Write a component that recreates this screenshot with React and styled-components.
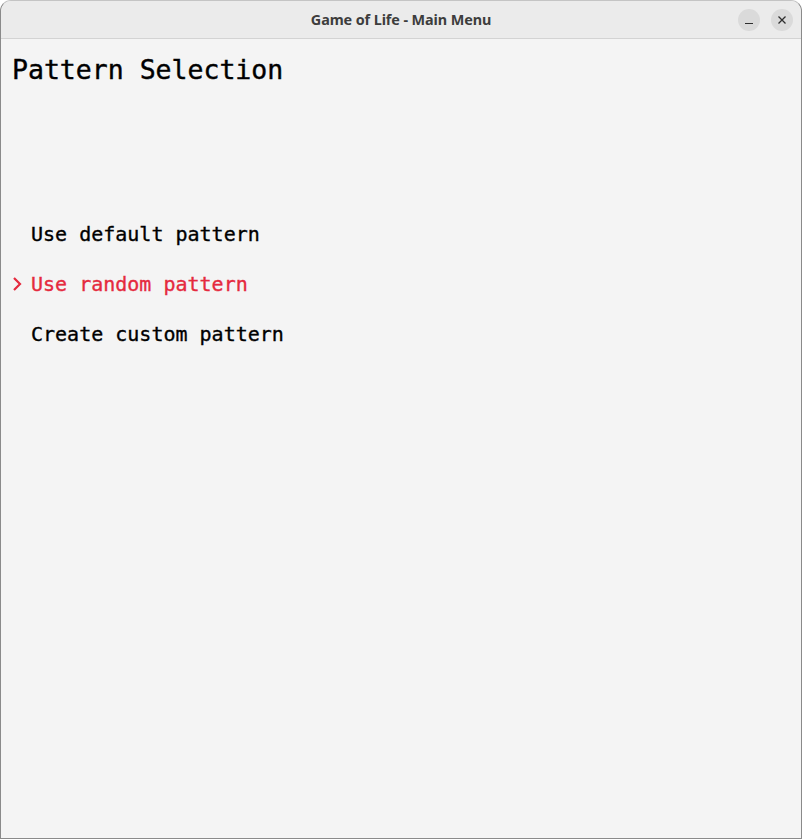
import React from 'react';
import styled, { createGlobalStyle } from 'styled-components';

const Global = createGlobalStyle`
    html, body {
        margin: 0;
        padding: 0;
        background: #ffffff;
    }
    #root {
        height: 839px;
    }
`

const Window = styled.div`
    width: 802px;
    height: 839px;
    box-sizing: border-box;
    display: flex;
    flex-direction: column;
    border: 1px solid #8a8a8a;
    border-top-color: #c4c4c4;
    border-radius: 11px 11px 0 0;
    overflow: hidden;
    background: #f4f4f4;
`

const TitleBar = styled.div`
    height: 37px;
    flex-shrink: 0;
    position: relative;
    display: flex;
    align-items: center;
    justify-content: center;
    background: #ebebeb;
    border-bottom: 1px solid #d3d3d3;
`

const Title = styled.div`
    font-family: "Noto Sans", "Open Sans", sans-serif;
    font-weight: 700;
    font-size: 14.4px;
    color: #3d3d3d;
    letter-spacing: -0.1px;
`

const Controls = styled.div`
    position: absolute;
    right: 8px;
    top: 8px;
    display: flex;
    gap: 11px;
`

const CtrlButton = styled.div`
    width: 22px;
    height: 22px;
    border-radius: 50%;
    background: #dadada;
    display: flex;
    align-items: center;
    justify-content: center;
`

const Content = styled.div`
    flex: 1;
    padding: 0 0 0 11px;
    font-family: "DejaVu Sans Mono", "Liberation Mono", monospace;
    color: #000000;
    -webkit-font-smoothing: none;
`

const Heading = styled.h1`
    margin: 0;
    padding-top: 13px;
    font-size: 26.5px;
    font-weight: 400;
    line-height: 36px;
    letter-spacing: 0;
    -webkit-text-stroke: 0.4px #000000;
`

const Menu = styled.div`
    margin-top: 132px;
    display: flex;
    flex-direction: column;
    gap: 22px;
`

const Item = styled.div`
    display: flex;
    align-items: center;
    height: 28px;
    font-size: 20px;
    font-weight: 400;
    color: ${p => (p.$active ? '#e52a3e' : '#000000')};
    -webkit-text-stroke: 0.35px ${p => (p.$active ? '#e52a3e' : '#000000')};
`

const Arrow = styled.span`
    width: 19px;
    display: flex;
    align-items: center;
`

const items = ['Use default pattern', 'Use random pattern', 'Create custom pattern'];

export default function App() {
    const selected = 1;
    return (
        <>
            <Global />
            <Window>
                <TitleBar>
                    <Title>Game of Life - Main Menu</Title>
                    <Controls>
                        <CtrlButton>
                            <svg width="10" height="10" viewBox="0 0 10 10">
                                <path d="M1 8.5h8" stroke="#2e2e2e" strokeWidth="1.2" />
                            </svg>
                        </CtrlButton>
                        <CtrlButton>
                            <svg width="10" height="10" viewBox="0 0 10 10">
                                <path d="M1.5 1.5l7 7M8.5 1.5l-7 7" stroke="#2e2e2e" strokeWidth="1.3" />
                            </svg>
                        </CtrlButton>
                    </Controls>
                </TitleBar>
                <Content>
                    <Heading>Pattern Selection</Heading>
                    <Menu>
                        {items.map((label, i) => (
                            <Item key={label} $active={i === selected}>
                                <Arrow>
                                    {i === selected && (
                                        <svg width="10" height="16" viewBox="0 0 10 16">
                                            <path d="M2 2l6 6-6 6" stroke="#e52a3e" strokeWidth="2.2" fill="none" />
                                        </svg>
                                    )}
                                </Arrow>
                                {label}
                            </Item>
                        ))}
                    </Menu>
                </Content>
            </Window>
        </>
    );
}
